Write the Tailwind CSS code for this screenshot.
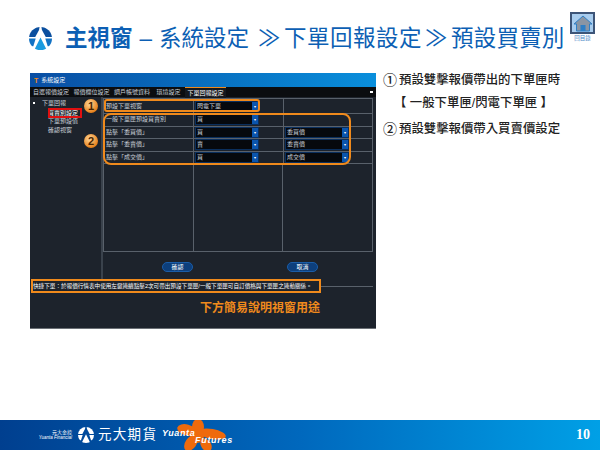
<!DOCTYPE html>
<html lang="zh-Hant">
<head>
  <meta charset="UTF-8">
  <title>預設買賣別</title>
  <script src="https://cdn.jsdelivr.net/npm/@tailwindcss/browser@4"></script>
</head>
<body class="bg-white font-['Liberation_Sans','Noto_Sans_CJK_TC',sans-serif]">
<div class="relative w-[600px] h-[450px] overflow-hidden flex flex-col bg-white">

  <!-- title -->
  <header class="h-[73px] flex items-start pl-[29px] pt-[27px] text-[#0c5fb4]">
    <svg class="w-[23px] h-[23px] shrink-0" viewBox="0 0 24 24">
      <defs><clipPath id="c1"><circle cx="12" cy="12" r="12"/></clipPath></defs>
      <g clip-path="url(#c1)">
        <path d="M0 0H11L10.500 3L6.500 10.500H0Z" fill="#0b4f9f"/>
        <path d="M24 0H13L13.500 3L17.500 10.500H24Z" fill="#0b4f9f"/>
        <path d="M0 12H7L4.500 20L0 20Z" fill="#1272c4"/>
        <path d="M24 12H17L19.500 20L24 20Z" fill="#1272c4"/>
        <path d="M12 11L18.500 24H5.500Z" fill="#1a9be0"/>
      </g>
    </svg>
    <h1 class="ml-[13px] text-[22.500px] leading-[24px] font-normal whitespace-nowrap flex"><b class="font-bold">主視窗</b><span class="ml-[7px]">–</span><span class="ml-[7px]">系統設定</span><span class="ml-[9px] w-[26px]">≫</span><span class="tracking-[0.5px]">下單回報設定</span><span class="ml-[3px] w-[26px]">≫</span><span class="tracking-[0.2px]">預設買賣別</span></h1>
  </header>

  <!-- home button -->
  <div class="absolute left-[570px] top-[12px] flex flex-col items-center">
    <div class="w-[25px] h-[22px] border-2 border-[#3d5578] bg-[#a9cdee] flex items-center justify-center">
      <svg class="w-[20px] h-[17px]" viewBox="0 0 20 17">
        <path d="M10 1L1 9H3.500V16H16.500V9H19Z" fill="#8a95a3" stroke="#2f7fc5" stroke-width="1"/>
        <rect x="7.500" y="10" width="5" height="6" fill="#2f7fc5"/>
      </svg>
    </div>
    <span class="text-[5.500px] leading-[9px] text-[#4a86c5]">回目錄</span>
  </div>

  <main class="flex-1 flex pl-[30px] items-start">
    <!-- settings window -->
    <section class="relative w-[346px] h-[256px] bg-[#1d232c] text-[6px] text-[#c9d0d8] flex flex-col border-b border-[#6b7076]">
      <div class="h-[14px] shrink-0 bg-gradient-to-r from-[#0a4ea3] to-[#0a8fdc] flex items-center pl-[4px] gap-[3px] text-white">
        <span class="text-[#f08a1c] font-bold text-[7px] leading-none">T</span><span>系統設定</span>
      </div>
      <nav class="h-[10px] shrink-0 bg-[#0b0d10] flex items-center pl-[1px] leading-[10px] whitespace-nowrap">
        <span class="w-[40px] text-center">自選報價設定</span>
        <span class="w-[41px] text-center">報價欄位設定</span>
        <span class="w-[40px] text-center">調戶帳號資料</span>
        <span class="w-[33px] text-center">環境設定</span>
        <span class="w-[41px] text-center bg-[#14181e] border-t border-[#f08a1c] text-white">下單回報設定</span>
        <span class="ml-auto mr-[3px] w-[3px] h-[2px] bg-white"></span>
      </nav>
      <div class="h-[182px] shrink-0 flex">
        <!-- tree -->
        <aside class="w-[73px] shrink-0 border-r-2 border-[#3a424c] pt-[2px] pl-[3px] leading-[8.500px]">
          <div class="flex items-center gap-[3px]"><span class="w-[2px] h-[2px] bg-white"></span><span class="ml-[4px]">下單回報</span></div>
          <div class="pl-[15px] mt-[1px]">
            <div class="text-white">買賣別設定</div>
            <div>下單預設值</div>
            <div>確認視窗</div>
          </div>
        </aside>
        <!-- settings table -->
        <div class="flex-1 pt-[1px] pr-[3px] flex flex-col">
          <div class="border-t border-x border-[#59616b] grid grid-cols-[89px_90px_1fr] grid-rows-[15px_repeat(4,12.500px)] [&>div]:border-b [&>div]:border-[#59616b] [&>div]:flex [&>div]:items-center">
            <div class="pl-[2px]">預設下單視窗</div>
            <div class="border-l border-[#59616b] px-[2px]"><span class="w-[62px] h-[9px] bg-[#06090e] outline outline-[#0a2f5e] flex justify-between items-center pl-[1px]">閃電下單<i class="w-[6px] h-[9px] bg-[#0b55ad] text-white not-italic text-center text-[4px] leading-[9px]">▾</i></span></div>
            <div class="border-l border-[#59616b]"></div>

            <div class="pl-[2px]">一般下單匣預設買賣別</div>
            <div class="border-l border-[#59616b] px-[2px]"><span class="w-[62px] h-[9px] bg-[#06090e] outline outline-[#0a2f5e] flex justify-between items-center pl-[1px]">買<i class="w-[6px] h-[9px] bg-[#0b55ad] text-white not-italic text-center text-[4px] leading-[9px]">▾</i></span></div>
            <div class="border-l border-[#59616b]"></div>

            <div class="pl-[2px]">點擊「委買價」</div>
            <div class="border-l border-[#59616b] px-[2px]"><span class="w-[62px] h-[9px] bg-[#06090e] outline outline-[#0a2f5e] flex justify-between items-center pl-[1px]">買<i class="w-[6px] h-[9px] bg-[#0b55ad] text-white not-italic text-center text-[4px] leading-[9px]">▾</i></span></div>
            <div class="border-l border-[#59616b] px-[2px]"><span class="w-[62px] h-[9px] bg-[#06090e] outline outline-[#0a2f5e] flex justify-between items-center pl-[1px]">委買價<i class="w-[6px] h-[9px] bg-[#0b55ad] text-white not-italic text-center text-[4px] leading-[9px]">▾</i></span></div>

            <div class="pl-[2px]">點擊「委賣價」</div>
            <div class="border-l border-[#59616b] px-[2px]"><span class="w-[62px] h-[9px] bg-[#06090e] outline outline-[#0a2f5e] flex justify-between items-center pl-[1px]">賣<i class="w-[6px] h-[9px] bg-[#0b55ad] text-white not-italic text-center text-[4px] leading-[9px]">▾</i></span></div>
            <div class="border-l border-[#59616b] px-[2px]"><span class="w-[62px] h-[9px] bg-[#06090e] outline outline-[#0a2f5e] flex justify-between items-center pl-[1px]">委賣價<i class="w-[6px] h-[9px] bg-[#0b55ad] text-white not-italic text-center text-[4px] leading-[9px]">▾</i></span></div>

            <div class="pl-[2px]">點擊「成交價」</div>
            <div class="border-l border-[#59616b] px-[2px]"><span class="w-[62px] h-[9px] bg-[#06090e] outline outline-[#0a2f5e] flex justify-between items-center pl-[1px]">買<i class="w-[6px] h-[9px] bg-[#0b55ad] text-white not-italic text-center text-[4px] leading-[9px]">▾</i></span></div>
            <div class="border-l border-[#59616b] px-[2px]"><span class="w-[62px] h-[9px] bg-[#06090e] outline outline-[#0a2f5e] flex justify-between items-center pl-[1px]">成交價<i class="w-[6px] h-[9px] bg-[#0b55ad] text-white not-italic text-center text-[4px] leading-[9px]">▾</i></span></div>
          </div>
          <div class="border-x border-b border-[#59616b] h-[88px] shrink-0 grid grid-cols-[89px_90px_1fr]">
            <div></div><div class="border-x border-[#59616b]"></div><div></div>
          </div>
          <div class="flex pt-[10px] text-white">
            <span class="ml-[59px] w-[31px] h-[10px] rounded-full bg-[#0d3f7c] border border-[#1a5da8] text-center leading-[8px]">確認</span>
            <span class="ml-[94px] w-[31px] h-[10px] rounded-full bg-[#0d3f7c] border border-[#1a5da8] text-center leading-[8px]">取消</span>
          </div>
        </div>
      </div>
      <div class="h-[14px] shrink-0 flex items-center">
        <p class="pl-[3px] w-[291px] shrink-0 text-[5.600px] leading-[14px] text-white whitespace-nowrap">快捷下單：於報價行情表中使用左鍵連續點擊2次可帶出預設下單匣/一般下單匣可自訂價格與下單匣之連動關係。</p>
        <span class="flex-1 h-px bg-[#59616b] mr-[3px]"></span>
      </div>
      <p class="pl-[170px] pt-[7px] text-[12px] leading-[16px] font-bold text-[#f08a1c] whitespace-nowrap">下方簡易說明視窗用途</p>
    </section>

    <!-- notes -->
    <aside class="ml-[7px] text-[12.400px] font-medium text-[#222] whitespace-nowrap">
      <p class="leading-[14px] h-[23px] flex"><span class="w-[16px] text-[14px]">①</span>預設雙擊報價帶出的下單匣時</p>
      <p class="leading-[14px] h-[26px] pl-[11px]">【 一般下單匣/閃電下單匣 】</p>
      <p class="leading-[14px] flex"><span class="w-[16px] text-[14px]">②</span>預設雙擊報價帶入買賣價設定</p>
    </aside>
  </main>

  <!-- overlays on the screenshot -->
  <div class="absolute left-[104px] top-[99px] w-[156px] h-[13px] border-2 border-[#f08a1c] rounded-[3px]"></div>
  <div class="absolute left-[103px] top-[113px] w-[248px] h-[52px] border-2 border-[#f08a1c] rounded-[8px]"></div>
  <div class="absolute left-[48px] top-[108px] w-[34px] h-[10px] border-2 border-[#e01010]"></div>
  <div class="absolute left-[31px] top-[279px] w-[290px] h-[14px] border-2 border-[#f08a1c]"></div>
  <div class="absolute left-[84px] top-[99px] w-[14px] h-[14px] rounded-full bg-[radial-gradient(circle_at_40%_35%,#ffd79a,#e8821c_70%,#a85a10)] text-[11px] leading-[14px] font-bold text-[#4a2500] text-center">1</div>
  <div class="absolute left-[84px] top-[134px] w-[14px] h-[14px] rounded-full bg-[radial-gradient(circle_at_40%_35%,#ffd79a,#e8821c_70%,#a85a10)] text-[11px] leading-[14px] font-bold text-[#4a2500] text-center">2</div>

  <!-- footer -->
  <footer class="h-[30px] shrink-0 bg-gradient-to-r from-[#003f8f] via-[#0068bd] to-[#00a0e6] flex items-center text-white relative">
    <div class="ml-[29px] w-[43px] text-right leading-none">
      <div class="text-[5px]">元大金控</div>
      <div class="text-[4.500px] italic mt-[1px] whitespace-nowrap">Yuanta Financial</div>
    </div>
    <svg class="ml-[6px] w-[16px] h-[16px] shrink-0" viewBox="0 0 24 24">
      <defs><clipPath id="c2"><circle cx="12" cy="12" r="12"/></clipPath></defs>
      <g clip-path="url(#c2)" fill="#fff">
        <path d="M0 0H11L10.500 3L6.500 10.500H0Z"/>
        <path d="M24 0H13L13.500 3L17.500 10.500H24Z"/>
        <path d="M0 12H7L4.500 20L0 20Z"/>
        <path d="M24 12H17L19.500 20L24 20Z"/>
        <path d="M12 11L18.500 24H5.500Z"/>
      </g>
    </svg>
    <span class="ml-[4px] text-[13.500px] leading-none tracking-[1.300px] whitespace-nowrap">元大期貨</span>
    <svg class="absolute left-[176px] top-0 w-[60px] h-[30px]" viewBox="0 0 60 30">
      <g fill="#ee6a0c">
        <ellipse cx="22" cy="7" rx="6" ry="8"/>
        <ellipse cx="11" cy="10" rx="10" ry="5.500" transform="rotate(15 11 10)"/>
        <ellipse cx="15" cy="23" rx="5.500" ry="9" transform="rotate(35 15 23)"/>
        <ellipse cx="36" cy="14" rx="14" ry="5" transform="rotate(10 36 14)"/>
        <ellipse cx="30" cy="25" rx="5" ry="7" transform="rotate(-35 30 25)"/>
        <circle cx="21" cy="16" r="7"/>
      </g>
    </svg>
    <span class="absolute left-[162px] top-[9px] text-[9px] leading-none italic font-semibold tracking-[0.6px]">Yuanta</span>
    <span class="absolute left-[195px] top-[16px] text-[9px] leading-none italic font-semibold tracking-[0.7px]">Futures</span>
    <span class="ml-auto mr-[10px] font-['Liberation_Serif',serif] font-bold text-[14px] leading-none">10</span>
  </footer>
</div>
</body>
</html>
